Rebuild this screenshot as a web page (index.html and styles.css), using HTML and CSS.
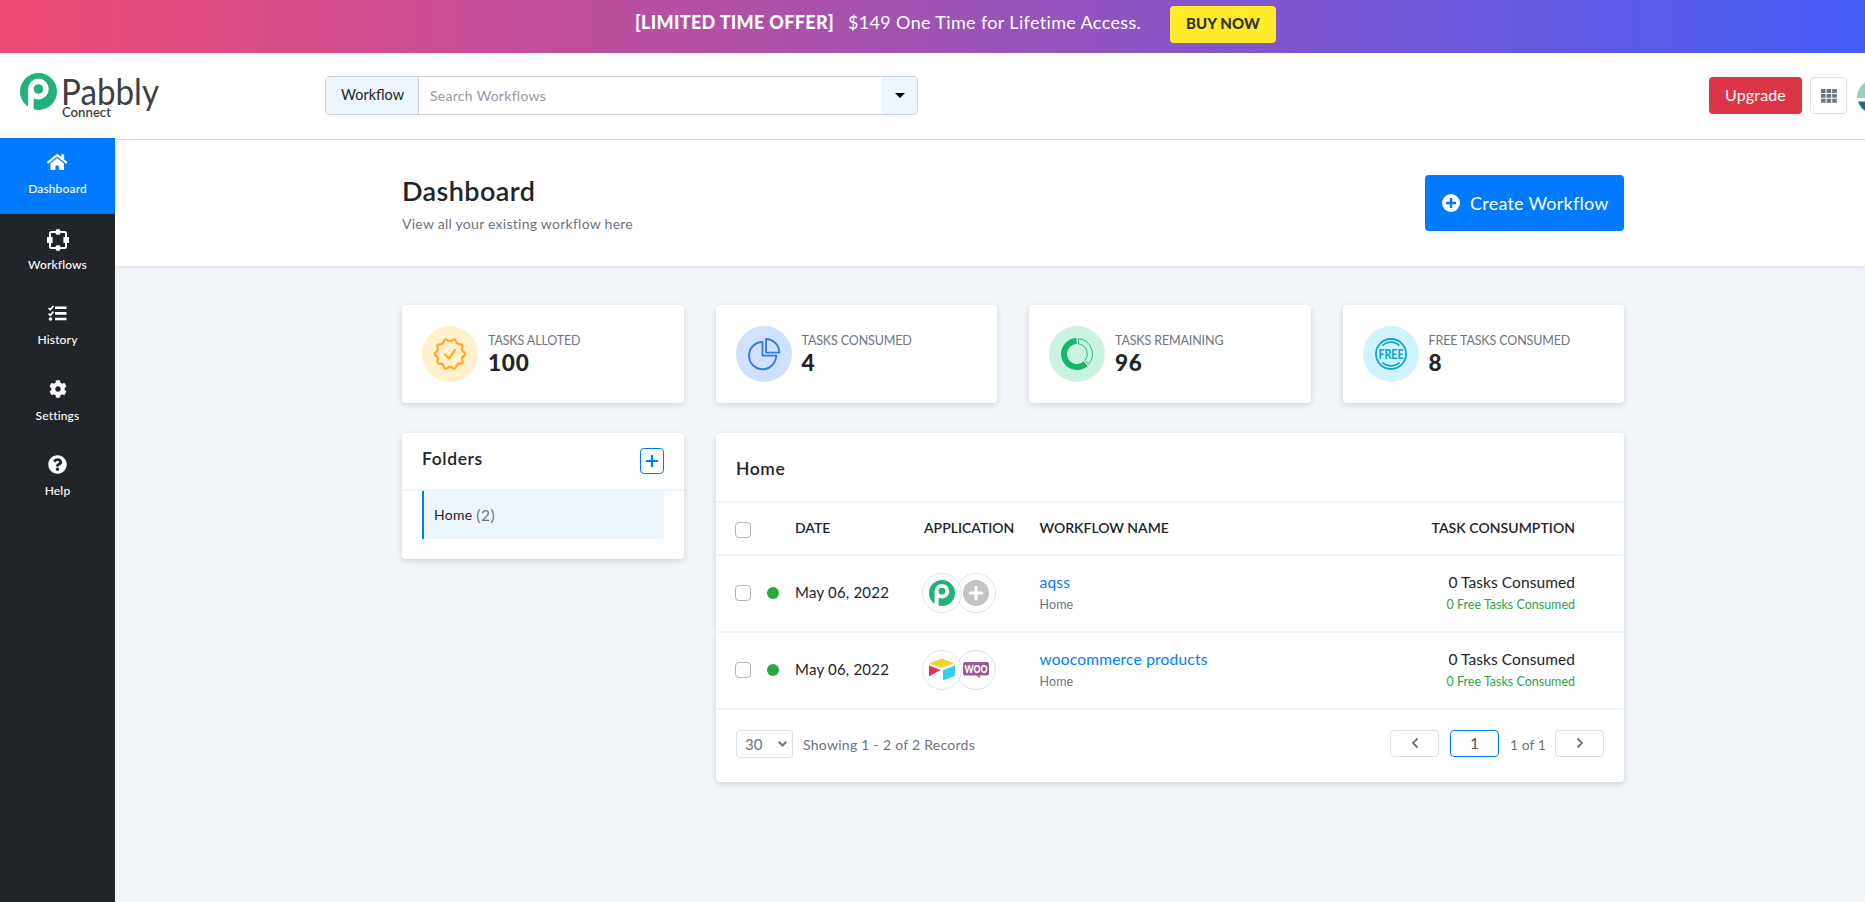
FILE: index.html
```html
<!DOCTYPE html>
<html lang="en">
<head>
<meta charset="utf-8">
<title>Dashboard - Pabbly Connect</title>
<link rel="stylesheet" href="styles.css">
</head>
<body>
<svg width="0" height="0" class="defs">
  <symbol id="p-mark" viewBox="0 0 37 37">
    <circle cx="18.5" cy="18.5" r="18.5" fill="#20b276"/>
    <path d="M8 16h5.700v21H12Q9.500 36 8 34.500z" fill="#fff"/>
    <circle cx="18.400" cy="16" r="7.600" fill="none" stroke="#fff" stroke-width="5.600"/>
  </symbol>
</svg>

<div class="offer">
  <strong class="offer-tag">[LIMITED TIME OFFER]</strong>
  <span class="offer-text">$149 One Time for Lifetime Access.</span>
  <a class="buy">BUY NOW</a>
</div>

<header class="topbar">
  <svg class="logo" width="144" height="50" viewBox="0 0 144 50">
    <use href="#p-mark" x="0" y="0" width="37" height="37"/>
    <text class="logo-name" x="41" y="32" textLength="98" lengthAdjust="spacingAndGlyphs">Pabbly</text>
    <text class="logo-sub" x="42" y="44" textLength="49" lengthAdjust="spacingAndGlyphs">Connect</text>
  </svg>
  <div class="search">
    <span class="search-scope">Workflow</span>
    <span class="search-input">Search Workflows</span>
    <span class="search-drop"><svg width="10" height="5" viewBox="0 0 10 5"><path d="M0 0h10L5 5z"/></svg></span>
  </div>
  <div class="top-actions">
    <a class="upgrade">Upgrade</a>
    <a class="apps"><svg width="16" height="14" viewBox="0 0 16 14" fill="#6c757d"><path d="M0 0h4.600v3.900H0zM5.600 0h4.600v3.900H5.600zM11.200 0h4.600v3.900h-4.600zM0 4.900h4.600v3.900H0zM5.600 4.900h4.600v3.900H5.600zM11.200 4.900h4.600v3.900h-4.600zM0 9.800h4.600v3.900H0zM5.600 9.800h4.600v3.900H5.600zM11.200 9.800h4.600v3.900h-4.600z"/></svg></a>
    <svg class="avatar" width="38" height="38" viewBox="0 0 38 38"><path d="M0 21a19 19 0 0 1 38 0z" fill="#8fd3bb"/><path d="M1 24.500h36a19 19 0 0 1-36 0z" fill="#1b7284"/></svg>
  </div>
</header>

<div class="shell">
  <nav class="sidebar">
    <a class="nav active"><span class="nav-icon"><svg width="20.250" height="18" viewBox="0 0 576 512" fill="#fff"><path d="M280.37 148.26L96 300.11V464a16 16 0 0 0 16 16l112.06-.29a16 16 0 0 0 15.92-16V368a16 16 0 0 1 16-16h64a16 16 0 0 1 16 16v95.64a16 16 0 0 0 16 16.05L464 480a16 16 0 0 0 16-16V300L295.67 148.26a12.19 12.19 0 0 0-15.3 0zM571.6 251.47L488 182.56V44.05a12 12 0 0 0-12-12h-56a12 12 0 0 0-12 12v72.61L318.47 43a48 48 0 0 0-61 0L4.34 251.47a12 12 0 0 0-1.6 16.9l25.5 31A12 12 0 0 0 45.15 301l235.22-193.74a12.19 12.19 0 0 1 15.3 0L530.9 301a12 12 0 0 0 16.9-1.6l25.5-31a12 12 0 0 0-1.7-16.93z"/></svg></span><span>Dashboard</span></a>
    <a class="nav"><span class="nav-icon icon-low"><svg width="22" height="22" viewBox="0 0 22 22"><rect x="3" y="3" width="16" height="16" rx="1.500" fill="none" stroke="#fff" stroke-width="2"/><path d="M0 8h5.600v6H0zM16.400 8H22v6h-5.600zM7.800 3 9.500.2h3L14.200 3l-1.700 2.800h-3zM7.800 19l1.700-2.800h3L14.200 19l-1.700 2.800h-3z" fill="#fff"/></svg></span><span>Workflows</span></a>
    <a class="nav"><span class="nav-icon"><svg width="19" height="17" viewBox="0 0 19 17" fill="none" stroke="#fff"><path d="M7 2.700h11.500M7 8.400h11.500M7 14h11.500" stroke-width="2.600"/><path d="M.6 3.100l1.700 1.500L5.500 1M.6 8.700l1.700 1.500L5.500 6.600" stroke-width="1.700"/><circle cx="2.500" cy="14" r="1.800" fill="#fff" stroke="none"/></svg></span><span>History</span></a>
    <a class="nav"><span class="nav-icon"><svg width="18" height="18" viewBox="0 0 512 512" fill="#fff"><path d="M487.4 315.7l-42.6-24.6c4.3-23.2 4.3-47 0-70.2l42.6-24.6c4.9-2.8 7.1-8.6 5.5-14-11.1-35.6-30-67.8-54.7-94.6-3.8-4.1-10-5.1-14.8-2.3L380.8 110c-17.9-15.4-38.5-27.3-60.8-35.1V25.8c0-5.6-3.9-10.5-9.4-11.7-36.7-8.2-74.3-7.8-109.2 0-5.5 1.2-9.4 6.1-9.4 11.7V75c-22.2 7.9-42.8 19.8-60.8 35.1L88.7 85.5c-4.9-2.8-11-1.9-14.8 2.3-24.7 26.7-43.6 58.9-54.7 94.6-1.7 5.4.6 11.2 5.5 14L67.3 221c-4.3 23.2-4.3 47 0 70.2l-42.6 24.6c-4.9 2.8-7.1 8.6-5.5 14 11.1 35.6 30 67.8 54.7 94.6 3.8 4.1 10 5.1 14.8 2.3l42.6-24.6c17.9 15.4 38.5 27.3 60.8 35.1v49.2c0 5.6 3.9 10.5 9.4 11.7 36.7 8.2 74.3 7.8 109.2 0 5.5-1.2 9.4-6.1 9.4-11.7v-49.2c22.2-7.9 42.8-19.8 60.8-35.1l42.6 24.6c4.9 2.8 11 1.9 14.8-2.3 24.7-26.7 43.6-58.9 54.7-94.6 1.5-5.5-.7-11.3-5.6-14.1zM256 336c-44.1 0-80-35.9-80-80s35.900-80 80-80 80 35.900 80 80-35.900 80-80 80z"/></svg></span><span>Settings</span></a>
    <a class="nav"><span class="nav-icon"><svg width="19" height="19" viewBox="0 0 512 512" fill="#fff"><path d="M504 256c0 136.997-111.043 248-248 248S8 392.997 8 256C8 119.083 119.043 8 256 8s248 111.083 248 248zM262.655 90c-54.497 0-89.255 22.957-116.549 63.758-3.536 5.286-2.353 12.415 2.715 16.258l34.699 26.31c5.205 3.947 12.621 3.008 16.665-2.122 17.864-22.658 30.113-35.797 57.303-35.797 20.429 0 45.698 13.148 45.698 32.958 0 14.976-12.363 22.667-32.534 33.976C247.128 238.528 216 254.941 216 296v4c0 6.627 5.373 12 12 12h56c6.627 0 12-5.373 12-12v-1.333c0-28.462 83.186-29.647 83.186-106.667 0-58.002-60.165-102-116.531-102zM256 338c-25.365 0-46 20.635-46 46 0 25.364 20.635 46 46 46s46-20.636 46-46c0-25.365-20.635-46-46-46z"/></svg></span><span>Help</span></a>
  </nav>

  <main class="main">
    <section class="heading">
      <div class="heading-inner">
        <div>
          <h1 class="title">Dashboard</h1>
          <p class="subtitle">View all your existing workflow here</p>
        </div>
        <a class="create"><svg width="18" height="18" viewBox="0 0 18 18"><circle cx="9" cy="9" r="9" fill="#fff"/><path d="M9 4v10M4 9h10" stroke="#007bff" stroke-width="2.400"/></svg><span>Create Workflow</span></a>
      </div>
    </section>

    <div class="content">
      <section class="stats">
        <div class="card stat">
          <span class="disc disc-yellow"><svg width="32" height="32" viewBox="0 0 32 32" fill="none" stroke="#ffa928" stroke-width="2.200" stroke-linejoin="round" stroke-linecap="round"><path d="M30 14.200Q32.800 16 30 17.800T28.400 22.750T26.250 25.700T22.050 28.750T18.600 29.900T13.400 29.900T9.950 28.750T5.750 25.700T3.600 22.750T2 17.800T2 14.200T3.600 9.250T5.750 6.300T9.950 3.250T13.400 2.100T18.600 2.100T22.050 3.250T26.250 6.300T28.400 9.250T30 14.200z"/><path d="M11 16.500l4 4 6-8.500"/></svg></span>
          <div><div class="label">TASKS ALLOTED</div><div class="value">100</div></div>
        </div>
        <div class="card stat">
          <span class="disc disc-blue"><svg width="32" height="32" viewBox="0 0 32 32" fill="none" stroke="#2f7cee" stroke-width="1.900" stroke-linejoin="round"><path d="M14.500 4A13.600 13.600 0 1 0 28.200 17.600H14.500z"/><path d="M18 1a13.500 13.500 0 0 1 13.300 13.600H18z"/></svg></span>
          <div><div class="label">TASKS CONSUMED</div><div class="value">4</div></div>
        </div>
        <div class="card stat">
          <span class="disc disc-green"><svg width="32" height="32" viewBox="0 0 32 32" fill="none" stroke="#12b76a"><path d="M15.500 3A13 13 0 1 0 24.600 25.800" stroke-width="6"/><path d="M17.500.7A15.400 15.400 0 0 1 27.600 26.200L24 22.500A10.300 10.300 0 0 0 17.500 5.800z" stroke-width=".9"/></svg></span>
          <div><div class="label">TASKS REMAINING</div><div class="value">96</div></div>
        </div>
        <div class="card stat">
          <span class="disc disc-cyan"><svg width="32" height="32" viewBox="0 0 32 32" fill="none" stroke="#0fa5cc" stroke-width="1.800"><circle cx="16" cy="16" r="15"/><path d="M7.500 7.600a12 12 0 0 1 17 0M7.500 24.400a12 12 0 0 0 17 0"/><text class="free" x="3.500" y="20.900" textLength="25" lengthAdjust="spacingAndGlyphs">FREE</text></svg></span>
          <div><div class="label">FREE TASKS CONSUMED</div><div class="value">8</div></div>
        </div>
      </section>

      <section class="panels">
        <div class="card folders">
          <div class="folders-head"><h2 class="folders-title">Folders</h2><a class="add"><svg width="12" height="12" viewBox="0 0 12 12"><path d="M6 0v12M0 6h12" stroke="#007bff" stroke-width="2.200"/></svg></a></div>
          <div class="folder"><span class="folder-name">Home</span><span class="folder-count">(2)</span></div>
        </div>

        <div class="card table">
          <h2 class="table-title">Home</h2>
          <div class="row head">
            <span class="check"></span><span></span><span>DATE</span><span class="h-app">APPLICATION</span><span>WORKFLOW NAME</span><span class="h-task">TASK CONSUMPTION</span>
          </div>
          <div class="row">
            <span class="check"></span><span class="dot"></span><span class="date">May 06, 2022</span>
            <span class="apps-pair">
              <span class="app"><svg width="26" height="26"><use href="#p-mark" width="26" height="26"/></svg></span>
              <span class="app second"><svg width="26" height="26" viewBox="0 0 26 26"><circle cx="13" cy="13" r="13" fill="#c4c4c4"/><path d="M13 7v12M7 13h12" stroke="#fff" stroke-width="3" stroke-linecap="round"/></svg></span>
            </span>
            <span class="flow"><a class="flow-link">aqss</a><span class="flow-home">Home</span></span>
            <span class="usage"><span class="used">0 Tasks Consumed</span><span class="used-free">0 Free Tasks Consumed</span></span>
          </div>
          <div class="row">
            <span class="check"></span><span class="dot"></span><span class="date">May 06, 2022</span>
            <span class="apps-pair">
              <span class="app"><svg width="26" height="26" viewBox="0 0 26 26"><path d="M0 6.200L13 1.500l12 4.700L12.500 11z" fill="#f7cf2d"/><path d="M0 8.500L11.500 13 0 19.600z" fill="#ee3150"/><path d="M14 13.300L26 8.500v10.200L14 23.500z" fill="#31cdf5"/></svg></span>
              <span class="app second"><svg width="26" height="26" viewBox="0 0 26 26"><path d="M2 5h22a2 2 0 0 1 2 2v9.500a2 2 0 0 1-2 2h-7.500l1 2.800-4.500-2.800H2a2 2 0 0 1-2-2V7a2 2 0 0 1 2-2z" fill="#9b5c8f"/><text class="woo" x="1.500" y="16" textLength="23" lengthAdjust="spacingAndGlyphs">WOO</text></svg></span>
            </span>
            <span class="flow"><a class="flow-link">woocommerce products</a><span class="flow-home">Home</span></span>
            <span class="usage"><span class="used">0 Tasks Consumed</span><span class="used-free">0 Free Tasks Consumed</span></span>
          </div>
          <div class="foot">
            <span class="select"><span>30</span><svg width="9" height="6" viewBox="0 0 9 6"><path d="M.8.8l3.700 3.700L8.200.8" fill="none" stroke="#6c757d" stroke-width="2"/></svg></span>
            <span class="showing">Showing 1 - 2 of 2 Records</span>
            <span class="pager">
              <a class="page"><svg width="8" height="12" viewBox="0 0 8 12"><path d="M6.500 1.500L2 6l4.500 4.500" fill="none" stroke="#6c757d" stroke-width="1.800"/></svg></a>
              <a class="page current">1</a>
              <span class="page-of">1 of 1</span>
              <a class="page"><svg width="8" height="12" viewBox="0 0 8 12"><path d="M1.500 1.500L6 6l-4.500 4.500" fill="none" stroke="#6c757d" stroke-width="1.800"/></svg></a>
            </span>
          </div>
        </div>
      </section>
    </div>
  </main>
</div>
</body>
</html>
```
FILE: styles.css
```css
* { box-sizing: border-box; }
body {
  margin: 0;
  height: 902px;
  overflow: hidden;
  font-family: Lato, "Liberation Sans", sans-serif;
  font-size: 15px;
  color: #212529;
  background: #f2f6fa;
  white-space: nowrap;
}
h1, h2, p { margin: 0; }
svg { display: block; flex: none; overflow: visible; }
.defs { display: none; }

.offer {
  display: flex;
  height: 53px;
  padding-left: 635px;
  color: #fff;
  font-size: 18px;
  line-height: 44px;
  background: linear-gradient(90deg, #ef4a74, #a052b4 50%, #445cf8);
}
.offer-tag { width: 213px; font-weight: 900; font-size: 18px; letter-spacing: 0.32px; line-height: 45px; }
.offer-text { width: 322px; letter-spacing: 0.35px; }
.buy {
  width: 106px;
  height: 37px;
  margin-top: 6px;
  border-radius: 4px;
  text-align: center;
  font-size: 15px;
  font-weight: 900;
  letter-spacing: 0.1px;
  line-height: 35px;
  color: #333;
  background: #ffeb2a;
}

.topbar {
  display: flex;
  height: 87px;
  padding-left: 20px;
  background: #fff;
  border-bottom: 1px solid #d6deee;
}
.logo { margin-top: 20px; }
.logo-name { font-size: 36px; font-weight: 400; fill: #3f3f3f; }
.logo-sub { font-size: 12.500px; font-weight: 600; fill: #3f3f3f; }
.search {
  display: flex;
  flex: none;
  width: 593px;
  height: 39px;
  margin: 23px 0 0 161px;
  border: 1px solid #ccd3dd;
  border-radius: 4px;
  overflow: hidden;
}
.search-scope {
  width: 93px;
  padding-left: 15px;
  font-size: 14.500px;
  line-height: 36px;
  background: #edf6ff;
  border-right: 1px solid #ccd3dd;
}
.search-input { flex: 1; padding-left: 11px; line-height: 38px; font-size: 14px; letter-spacing: 0.29px; color: #999; }
.search-drop { display: flex; justify-content: center; width: 35px; padding-top: 16px; background: #edf6ff; }
.top-actions { display: flex; flex: none; margin: 24px 0 0 791px; }
.upgrade {
  width: 93px;
  height: 37px;
  border-radius: 4px;
  text-align: center;
  font-size: 16px;
  letter-spacing: 0.15px;
  line-height: 35px;
  color: #fff;
  background: #dc3545;
}
.apps {
  display: flex;
  align-items: center;
  justify-content: center;
  width: 37px;
  height: 37px;
  margin: 0 10px 0 8px;
  border: 1px solid #dfe2e8;
  border-radius: 4px;
}

.shell { display: flex; height: 762px; }
.sidebar { position: relative; width: 115px; margin-top: -2px; height: 764px; background: #212529; }
.nav {
  display: flex;
  flex-direction: column;
  align-items: center;
  height: 75.400px;
  color: #fff;
  font-size: 12px;
  font-weight: 500;
  letter-spacing: 0.15px;
  line-height: 18px;
}
.nav-icon { display: flex; align-items: center; height: 24px; margin: 12px 0 6px; }
.icon-low { margin: 14px 0 4px; }
.nav.active { background: #007bff; height: 76px; }

.main { flex: 1; }
.heading { position: relative; height: 126px; background: #fff; box-shadow: 0 2px 4px rgba(0,0,0,.075); }
.heading-inner { display: flex; justify-content: space-between; width: 1222px; margin-left: 287px; padding-top: 35px; }
.title { font-size: 27px; font-weight: 600; letter-spacing: 0.4px; line-height: 31px; }
.subtitle { margin-top: 7px; font-size: 14px; letter-spacing: 0.26px; line-height: 22px; color: #6c757d; }
.create {
  display: flex;
  align-items: center;
  gap: 10px;
  width: 199px;
  height: 56px;
  padding-left: 17px;
  border-radius: 4px;
  font-size: 18px;
  letter-spacing: 0.24px;
  color: #fff;
  background: #007bff;
}
.content { width: 1222px; margin-left: 287px; padding-top: 39px; }
.card { background: #fff; border-radius: 4px; box-shadow: 0 2px 6px rgba(0,0,0,.14); }

.stats { display: grid; grid-template-columns: repeat(4, 1fr); gap: 32px; }
.stat { display: flex; gap: 10px; height: 98px; padding: 21px 0 0 20px; }
.disc { display: flex; align-items: center; justify-content: center; width: 56px; height: 56px; border-radius: 50%; }
.disc-yellow { background: #fff1cb; }
.disc-blue { background: #cfe1ff; }
.disc-green { background: #cbf4e0; }
.disc-cyan { background: #cff4fd; }
.free { font-size: 14px; font-weight: 900; fill: #0fa5cc; stroke: none; }
.label { margin-top: 6px; font-size: 12.500px; letter-spacing: -0.13px; line-height: 17px; color: #6c757d; }
.value { font-size: 22.500px; font-weight: 900; letter-spacing: 0.8px; line-height: 28px; }

.panels { display: flex; align-items: flex-start; gap: 32px; margin-top: 30px; }
.folders { width: 282px; height: 126px; }
.folders-head { display: flex; justify-content: space-between; height: 58px; padding: 15px 20px 0; border-bottom: 2px solid #edf6ff; }
.folders-title { font-size: 17.500px; font-weight: 600; letter-spacing: 0.6px; line-height: 21px; }
.add { display: flex; align-items: center; justify-content: center; width: 24px; height: 26px; border: 1px solid #007bff; border-radius: 4px; }
.folder { display: flex; gap: 4px; height: 48px; margin: 0 20px; padding-left: 10px; border-left: 2px solid #007bff; background: #edf6ff; line-height: 48px; font-size: 14px; letter-spacing: 0.25px; }
.folder-count { font-size: 15.500px; letter-spacing: 0.5px; color: #6c757d; }

.table { width: 908px; height: 349px; }
.table-title { height: 70px; padding: 25px 0 0 20px; border-bottom: 2px solid #edf6ff; font-size: 17.500px; font-weight: 600; letter-spacing: 0.6px; line-height: 21px; }
.row {
  display: grid;
  grid-template-columns: 32px 28px 128px 116.500px 1fr auto;
  height: 77px;
  padding: 0 49px 0 19px;
  border-bottom: 2px solid #edf6ff;
}
.row.head { height: 53px; font-size: 14px; font-weight: 600; line-height: 49px; }
.h-app { padding-left: 1px; }
.h-task { letter-spacing: 0.05px; }
.check { width: 16px; height: 16px; margin-top: 29px; border: 1px solid #adb5bd; border-radius: 4px; }
.head .check { margin-top: 19px; }
.dot { width: 12px; height: 12px; margin-top: 31px; border-radius: 50%; background: #28a745; }
.date { letter-spacing: 0.2px; line-height: 73px; }
.apps-pair { display: flex; padding-top: 17px; }
.app { display: flex; align-items: center; justify-content: center; width: 40px; height: 40px; margin-left: -1px; border: 1px solid #d9e4fc; border-radius: 50%; background: #fff; z-index: 1; }
.app.second { margin-left: -6px; z-index: 0; }
.woo { font-size: 11.500px; font-weight: 900; fill: #fff; }
.flow, .usage { display: flex; flex-direction: column; padding-top: 15px; line-height: 22px; }
.usage { align-items: flex-end; }
.flow-link { font-size: 15.500px; letter-spacing: 0.21px; color: #007bff; }
.used { font-size: 15.500px; letter-spacing: 0.07px; }
.flow-home { font-size: 12.500px; color: #6c757d; line-height: 24px; letter-spacing: 0.1px; }
.used-free { font-size: 12.500px; color: #28a745; line-height: 24px; }

.foot { display: flex; padding: 20px 20px 0; color: #6c757d; }
.select { display: flex; align-items: center; justify-content: space-between; width: 57px; height: 28px; padding: 0 5px 1px 8px; border: 1px solid #dcdfe5; border-radius: 4px; }
.showing { padding-left: 10px; font-size: 14px; letter-spacing: 0.27px; line-height: 30px; }
.pager { display: flex; margin-left: auto; }
.page { display: flex; align-items: center; justify-content: center; width: 49px; height: 27px; padding-bottom: 2px; border: 1px solid #dcdfe5; border-radius: 4px; }
.page.current { margin: 0 11px; border-color: #007bff; color: #495057; }
.page-of { width: 45px; font-size: 14px; line-height: 30px; }
```
